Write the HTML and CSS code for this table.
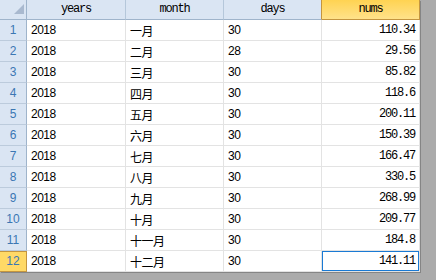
FILE: index.html
```html
<!DOCTYPE html>
<html>
<head>
<meta charset="utf-8">
<link rel="stylesheet" href="styles.css">
</head>
<body>
<div class="sheet">
  <div class="c corner"><svg width="10" height="10" viewBox="0 0 10 10"><polygon points="10,0 10,10 0,10" fill="#a9b9cf"/></svg></div>
  <div class="c hd">years</div>
  <div class="c hd">month</div>
  <div class="c hd hd-pre">days</div>
  <div class="c hd hd-sel">nums</div>

  <div class="c rn">1</div><div class="c tx">2018</div><div class="c tx">一月</div><div class="c tx">30</div><div class="c num">110.34</div>
  <div class="c rn">2</div><div class="c tx">2018</div><div class="c tx">二月</div><div class="c tx">28</div><div class="c num">29.56</div>
  <div class="c rn">3</div><div class="c tx">2018</div><div class="c tx">三月</div><div class="c tx">30</div><div class="c num">85.82</div>
  <div class="c rn">4</div><div class="c tx">2018</div><div class="c tx">四月</div><div class="c tx">30</div><div class="c num">118.6</div>
  <div class="c rn">5</div><div class="c tx">2018</div><div class="c tx">五月</div><div class="c tx">30</div><div class="c num">200.11</div>
  <div class="c rn">6</div><div class="c tx">2018</div><div class="c tx">六月</div><div class="c tx">30</div><div class="c num">150.39</div>
  <div class="c rn">7</div><div class="c tx">2018</div><div class="c tx">七月</div><div class="c tx">30</div><div class="c num">166.47</div>
  <div class="c rn">8</div><div class="c tx">2018</div><div class="c tx">八月</div><div class="c tx">30</div><div class="c num">330.5</div>
  <div class="c rn">9</div><div class="c tx">2018</div><div class="c tx">九月</div><div class="c tx">30</div><div class="c num">268.99</div>
  <div class="c rn">10</div><div class="c tx">2018</div><div class="c tx">十月</div><div class="c tx">30</div><div class="c num">209.77</div>
  <div class="c rn">11</div><div class="c tx">2018</div><div class="c tx">十一月</div><div class="c tx">30</div><div class="c num">184.8</div>
  <div class="c rn rn-sel">12</div><div class="c tx">2018</div><div class="c tx">十二月</div><div class="c tx">30</div><div class="c num num-sel">141.11</div>
</div>
</body>
</html>
```
FILE: styles.css
```css
html, body {
  margin: 0;
  padding: 0;
  background: #ababab;
}
body {
  width: 436px;
  height: 280px;
  overflow: hidden;
}
.sheet {
  display: grid;
  grid-template-columns: 27px 99px 98px 98px 98px;
  grid-template-rows: 20px repeat(12, 21px);
  width: 420px;
  background: #fff;
  box-shadow: 1px 1px 0 #858585;
}
.c {
  box-sizing: border-box;
  border-right: 1px solid #e3e3e3;
  border-bottom: 1px solid #e3e3e3;
  display: flex;
  align-items: center;
  white-space: nowrap;
  overflow: hidden;
}
.corner {
  background: #dae5f3;
  border-right: 1px solid #9fb4cb;
  border-bottom: 1px solid #9fb4cb;
  justify-content: flex-end;
  align-items: flex-end;
  padding: 0 2px 5px 0;
}
.corner svg { display: block; }
.hd {
  background: #dae5f3;
  border-right: 1px solid #b5c7da;
  border-bottom: 1px solid #9fb4cb;
  justify-content: center;
  font-family: "Liberation Mono", "DejaVu Sans Mono", monospace;
  font-size: 12px;
  letter-spacing: -1.2px;
  color: #000;
  padding-bottom: 1px;
}
.hd-pre { border-right-color: #c4953f; }
.hd-sel {
  background: linear-gradient(#ffd352, #ffe28a);
  border-right-color: #c4953f;
  border-bottom-color: #c4953f;
}
.rn {
  background: #dae5f3;
  border-right: 1px solid #9fb4cb;
  border-bottom: 1px solid #bccbdc;
  justify-content: center;
  font-family: "Liberation Sans", Arial, sans-serif;
  font-size: 12px;
  color: #3b77b3;
}
.rn-sel {
  background: #ffd966;
  border-right-color: #c4953f;
  border-bottom-color: #c4953f;
  box-shadow: inset 0 1px 0 #c4953f;
}
.tx {
  padding-left: 4px;
  font-family: "Liberation Sans", "Noto Sans CJK SC", sans-serif;
  font-size: 12px;
  letter-spacing: -0.5px;
  color: #000;
}
.num {
  justify-content: flex-end;
  padding-right: 4px;
  font-family: "Liberation Mono", "DejaVu Sans Mono", monospace;
  font-size: 12px;
  letter-spacing: -1.2px;
  color: #000;
}
.num-sel {
  box-shadow: inset 0 0 0 1px #1a7ad4;
}
```
